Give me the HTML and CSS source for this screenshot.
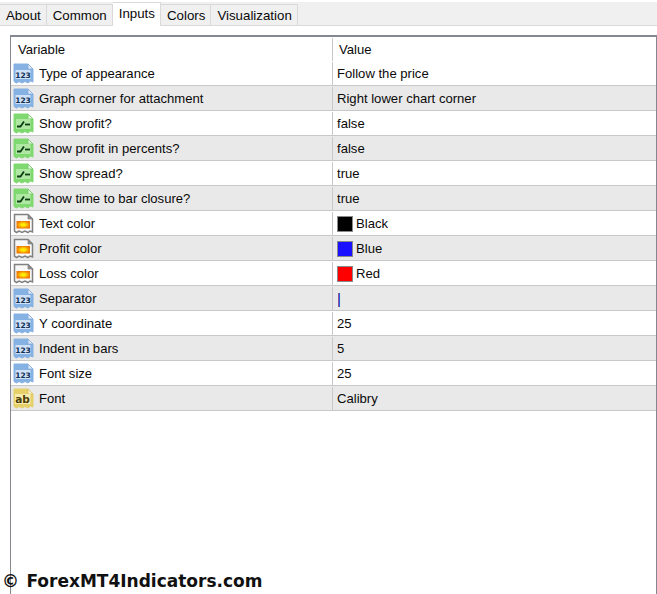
FILE: index.html
```html
<!DOCTYPE html>
<html lang="en">
<head>
    <meta charset="UTF-8">
    <meta name="viewport" content="width=device-width, initial-scale=1.0">
    <title>Inputs</title>
    <link rel="stylesheet" href="styles.css">
</head>
<body>
    <svg class="defs" width="0" height="0">
        <defs>
            <radialGradient id="heat">
                <stop offset="0.250" stop-color="#ffee00"/>
                <stop offset="1" stop-color="#f07800"/>
            </radialGradient>
        </defs>
        <symbol id="sheet-num" viewBox="0 0 21 21">
            <path d="M1 1H15L20 6V19L17.500 18L15 20L12 18.500L9 20L6 18.500L3.500 20L1 18.500Z" fill="#86b1e3" stroke="#86b1e3"/>
            <path d="M15 1V6H20Z" fill="#dfeafa" stroke="#7ea6d6" stroke-width="0.700"/>
            <rect x="2.500" y="7" width="15" height="9" fill="#cfe1f6"/>
        </symbol>
        <symbol id="sheet-bool" viewBox="0 0 21 21">
            <path d="M1 1H15L20 6V19L17.500 18L15 20L12 18.500L9 20L6 18.500L3.500 20L1 18.500Z" fill="#80d970" stroke="#80d970"/>
            <path d="M15 1V6H20Z" fill="#dff6da" stroke="#6cc45e" stroke-width="0.700"/>
            <rect x="3" y="6" width="14.500" height="10" fill="#aee8a3"/>
            <path d="M4 13.500H7.500L11 8.500" fill="none" stroke="#0f3d15" stroke-width="1.800"/>
            <path d="M12 11.500H17" fill="none" stroke="#0f3d15" stroke-width="1.800"/>
        </symbol>
        <symbol id="sheet-color" viewBox="0 0 21 21">
            <path d="M1.500 1.500H15L19.500 6V19L17 18L15 19.500L12 18L9 19.500L6 18L3.500 19.500L1.500 18Z" fill="#f7f7f7" stroke="#808080" stroke-width="1.500"/>
            <path d="M15 1.500V6H19.500Z" fill="#8f8f8f" stroke="#808080" stroke-width="0.700"/>
            <rect x="3.500" y="8" width="13.500" height="7.500" fill="url(#heat)"/>
        </symbol>
        <symbol id="sheet-text" viewBox="0 0 21 21">
            <path d="M1 1H15L20 6V19L17.500 18L15 20L12 18.500L9 20L6 18.500L3.500 20L1 18.500Z" fill="#e5d06a" stroke="#e5d06a"/>
            <path d="M15 1V6H20Z" fill="#faf3cc" stroke="#d4bd5a" stroke-width="0.700"/>
            <rect x="2" y="6" width="15.500" height="10" fill="#f6ecae"/>
        </symbol>
    </svg>

    <div class="tabs">
        <div class="tab">About</div>
        <div class="tab">Common</div>
        <div class="tab active">Inputs</div>
        <div class="tab">Colors</div>
        <div class="tab">Visualization</div>
    </div>

    <div class="list">
        <div class="row head">
            <div class="name">Variable</div>
            <div class="value">Value</div>
        </div>
        <div class="row">
            <div class="name"><svg class="icon" viewBox="0 0 21 21"><use href="#sheet-num"/><text x="10" y="14.500" class="icon-num">123</text></svg>Type of appearance</div>
            <div class="value">Follow the price</div>
        </div>
        <div class="row">
            <div class="name"><svg class="icon" viewBox="0 0 21 21"><use href="#sheet-num"/><text x="10" y="14.500" class="icon-num">123</text></svg>Graph corner for attachment</div>
            <div class="value">Right lower chart corner</div>
        </div>
        <div class="row">
            <div class="name"><svg class="icon"><use href="#sheet-bool"/></svg>Show profit?</div>
            <div class="value">false</div>
        </div>
        <div class="row">
            <div class="name"><svg class="icon"><use href="#sheet-bool"/></svg>Show profit in percents?</div>
            <div class="value">false</div>
        </div>
        <div class="row">
            <div class="name"><svg class="icon"><use href="#sheet-bool"/></svg>Show spread?</div>
            <div class="value">true</div>
        </div>
        <div class="row">
            <div class="name"><svg class="icon"><use href="#sheet-bool"/></svg>Show time to bar closure?</div>
            <div class="value">true</div>
        </div>
        <div class="row">
            <div class="name"><svg class="icon"><use href="#sheet-color"/></svg>Text color</div>
            <div class="value"><span class="swatch black"></span>Black</div>
        </div>
        <div class="row">
            <div class="name"><svg class="icon"><use href="#sheet-color"/></svg>Profit color</div>
            <div class="value"><span class="swatch blue"></span>Blue</div>
        </div>
        <div class="row">
            <div class="name"><svg class="icon"><use href="#sheet-color"/></svg>Loss color</div>
            <div class="value"><span class="swatch red"></span>Red</div>
        </div>
        <div class="row">
            <div class="name"><svg class="icon" viewBox="0 0 21 21"><use href="#sheet-num"/><text x="10" y="14.500" class="icon-num">123</text></svg>Separator</div>
            <div class="value separator">|</div>
        </div>
        <div class="row">
            <div class="name"><svg class="icon" viewBox="0 0 21 21"><use href="#sheet-num"/><text x="10" y="14.500" class="icon-num">123</text></svg>Y coordinate</div>
            <div class="value">25</div>
        </div>
        <div class="row">
            <div class="name"><svg class="icon" viewBox="0 0 21 21"><use href="#sheet-num"/><text x="10" y="14.500" class="icon-num">123</text></svg>Indent in bars</div>
            <div class="value">5</div>
        </div>
        <div class="row">
            <div class="name"><svg class="icon" viewBox="0 0 21 21"><use href="#sheet-num"/><text x="10" y="14.500" class="icon-num">123</text></svg>Font size</div>
            <div class="value">25</div>
        </div>
        <div class="row">
            <div class="name"><svg class="icon" viewBox="0 0 21 21"><use href="#sheet-text"/><text x="9.500" y="15" class="icon-ab">ab</text></svg>Font</div>
            <div class="value">Calibry</div>
        </div>
    </div>

    <div class="watermark">© ForexMT4Indicators.com</div>
</body>
</html>
```

FILE: styles.css
```css
* {
    margin: 0;
    padding: 0;
    box-sizing: border-box;
}
body {
    font-family: 'Liberation Sans', Arial, sans-serif;
    font-size: 13.1px;
    color: #0a0a0a;
    background-color: #fff;
    width: 657px;
    height: 594px;
    overflow: hidden;
    position: relative;
}
.defs {
    position: absolute;
}
.tabs {
    display: flex;
    align-items: flex-end;
    height: 24px;
    margin-top: 2px;
    background-color: #f0f0f0;
    border-bottom: 1px solid #d9d9d9;
}
.tab {
    height: 21px;
    line-height: 21px;
    padding: 0 5px 0 6px;
    font-size: 13.300px;
    background-color: #f0f0f0;
    border: 1px solid #d9d9d9;
    border-left: 0;
    border-bottom: 0;
}
.tab.active {
    height: 24px;
    line-height: 21px;
    background-color: #fff;
    margin-bottom: -1px;
    padding-bottom: 3px;
}
.list {
    margin: 9px 0 0 10px;
    height: 570px;
    border: 2px solid #858891;
    border-bottom: 0;
    border-right-width: 1px;
    border-left-width: 1px;
}
.row {
    display: flex;
    height: 25px;
    padding-top: 1px;
    line-height: 24px;
    border-bottom: 1px solid #c8c8c8;
}
.row:nth-child(odd) {
    background-color: #e9e9e9;
}
.row.head {
    height: 24px;
    border-bottom: 0;
    background-color: #fff;
}
.name {
    display: flex;
    align-items: center;
    width: 322px;
    padding-left: 2px;
    border-right: 1px solid #c8c8c8;
}
.head .name {
    padding-left: 7px;
}
.head .value {
    padding-left: 6px;
}
.value {
    display: flex;
    align-items: center;
    padding-left: 4px;
}
.icon {
    width: 21px;
    height: 21px;
    margin: -1px 5px 0 0;
    flex-shrink: 0;
}
.icon-num {
    font-family: 'DejaVu Sans', sans-serif;
    font-size: 7.500px;
    font-weight: bold;
    fill: #0f2f55;
    text-anchor: middle;
}
.icon-ab {
    font-family: 'DejaVu Sans', sans-serif;
    font-size: 10.500px;
    font-weight: bold;
    fill: #4a3d05;
    text-anchor: middle;
}
.swatch {
    width: 16px;
    height: 16px;
    margin-right: 3px;
    border: 1px solid #8a8a8a;
}
.swatch.black { background-color: #000; }
.swatch.blue { background-color: #1a10ff; }
.swatch.red { background-color: #ff0000; }
.separator {
    color: #0000a0;
    font-size: 15px;
}
.watermark {
    position: absolute;
    left: 2px;
    top: 571px;
    font-family: 'DejaVu Sans', sans-serif;
    font-size: 17px;
    font-weight: bold;
    word-spacing: 1.500px;
    color: #111;
}
```
